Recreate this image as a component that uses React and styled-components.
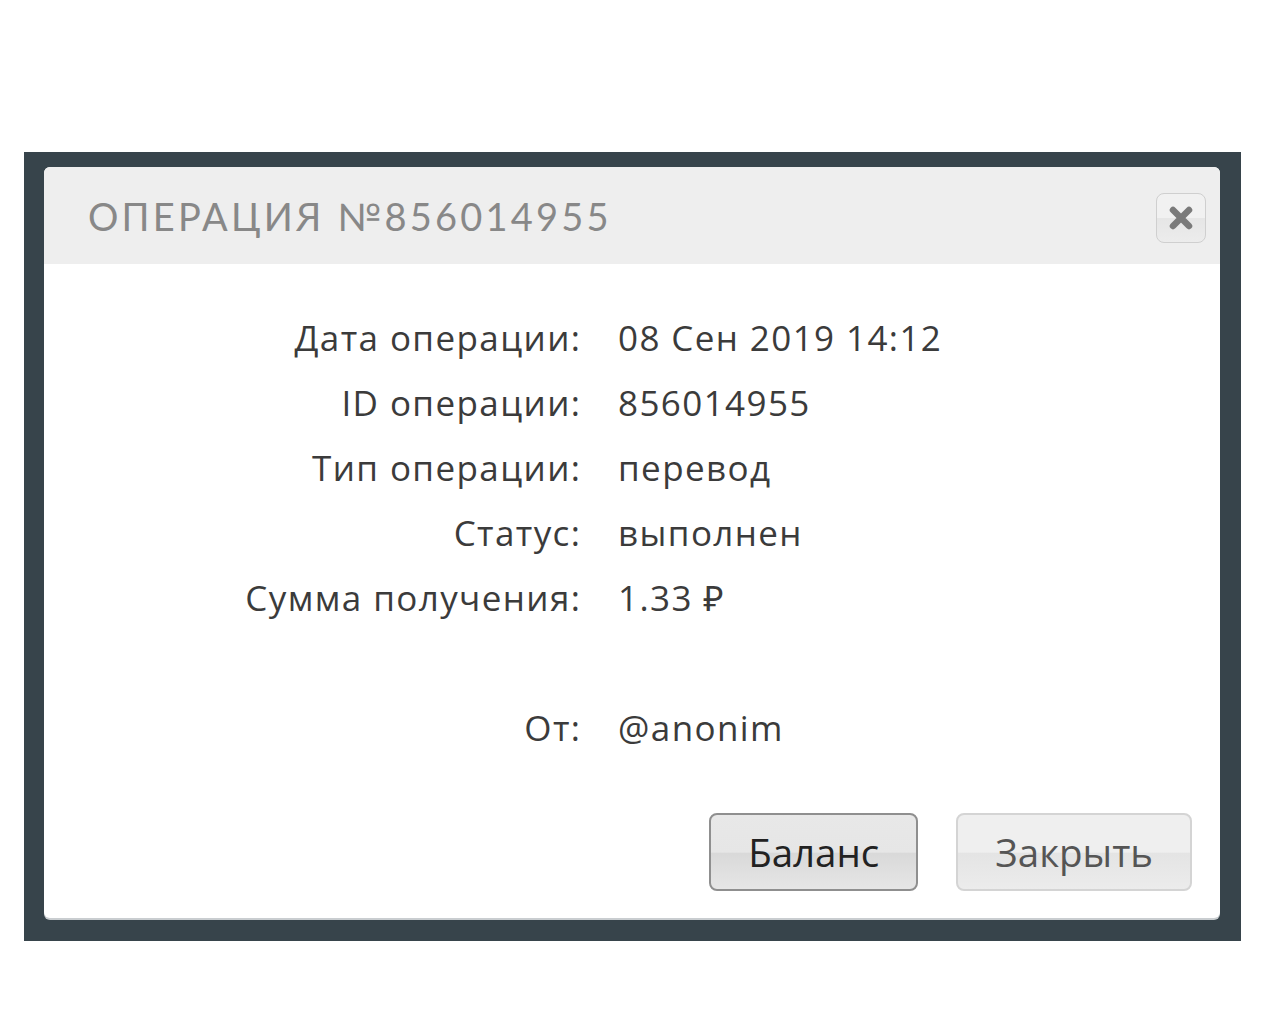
import React from "react";
import styled, { createGlobalStyle } from "styled-components";

const GlobalStyle = createGlobalStyle`
  body {
    margin: 0;
    background: #ffffff;
    font-family: "Open Sans", "Noto Sans", sans-serif;
  }
`;

const rows = [
  ["Дата операции:", "08 Сен 2019 14:12"],
  ["ID операции:", "856014955"],
  ["Тип операции:", "перевод"],
  ["Статус:", "выполнен"],
  ["Сумма получения:", "1.33 ₽"],
  null,
  ["От:", "@anonim"],
];

const App = () => {
  return (
    <>
      <GlobalStyle />
      <Backdrop>
        <Modal>
          <Header>
            <Title>ОПЕРАЦИЯ №856014955</Title>
            <CloseButton aria-label="close">
              <svg width="26" height="26" viewBox="0 0 26 26">
                <path
                  d="M5 5 L21 21 M21 5 L5 21"
                  stroke="#7a7a7a"
                  strokeWidth="6.5"
                  strokeLinecap="round"
                />
              </svg>
            </CloseButton>
          </Header>
          <Body>
            <Details>
              {rows.map((row, i) =>
                row ? (
                  <React.Fragment key={i}>
                    <Label>{row[0]}</Label>
                    <Value>{row[1]}</Value>
                  </React.Fragment>
                ) : (
                  <Spacer key={i} />
                )
              )}
            </Details>
            <Footer>
              <Button className="primary">Баланс</Button>
              <Button>Закрыть</Button>
            </Footer>
          </Body>
        </Modal>
      </Backdrop>
    </>
  );
};

const Backdrop = styled.div`
  margin: 152px 0 0 24px;
  width: 1217px;
  height: 789px;
  box-sizing: border-box;
  padding: 15px 21px 23px 20px;
  background-color: #37444b;
`;

const Modal = styled.div`
  height: 100%;
  background: #ffffff;
  border-radius: 6px;
  overflow: hidden;
  display: flex;
  flex-direction: column;
  box-shadow: 0 2px 0 #c9cdd0;
`;

const Header = styled.div`
  height: 97px;
  flex-shrink: 0;
  background: #eeeeee;
  display: flex;
  align-items: center;
  justify-content: space-between;
  padding: 0 14px 0 44px;
`;

const Title = styled.h2`
  margin: 0;
  font-family: "Lato", "Noto Sans", sans-serif;
  font-weight: 400;
  font-size: 38px;
  letter-spacing: 3.2px;
  color: #888888;
`;

const CloseButton = styled.button`
  width: 50px;
  height: 50px;
  margin-top: 4px;
  border: 1px solid #cfcfcf;
  border-radius: 8px;
  background: linear-gradient(#f1f1f1 0%, #f1f1f1 50%, #e6e6e6 51%, #ececec 100%);
  display: flex;
  align-items: center;
  justify-content: center;
  padding: 0;
  cursor: pointer;
`;

const Body = styled.div`
  flex: 1;
  display: flex;
  flex-direction: column;
  padding: 41px 28px 27px 0;
`;

const Details = styled.div`
  display: grid;
  grid-template-columns: 536px 1fr;
  column-gap: 38px;
  grid-auto-rows: 65px;
  align-items: center;
  font-family: "Open Sans", "Noto Sans", sans-serif;
  font-size: 35px;
  letter-spacing: 1.4px;
  color: #3b3b3b;
`;

const Label = styled.div`
  text-align: right;
  margin-right: -1.4px;
`;

const Value = styled.div`
  text-align: left;
`;

const Spacer = styled.div`
  grid-column: 1 / span 2;
`;

const Footer = styled.div`
  margin-top: auto;
  display: flex;
  justify-content: flex-end;
  gap: 38px;
`;

const Button = styled.button`
  height: 78px;
  padding: 0 37px;
  font-family: "Open Sans", "DejaVu Sans", sans-serif;
  font-size: 38.5px;
  color: #555555;
  border: 2px solid #d4d4d4;
  border-radius: 8px;
  background: linear-gradient(#efefef 0%, #efefef 50%, #e4e4e4 52%, #ececec 100%);
  cursor: pointer;
  &.primary {
    color: #222222;
    border-color: #8f8f8f;
    background: linear-gradient(#e8e8e8 0%, #e6e6e6 50%, #d9d9d9 52%, #e6e6e6 100%);
  }
`;

export default App;
